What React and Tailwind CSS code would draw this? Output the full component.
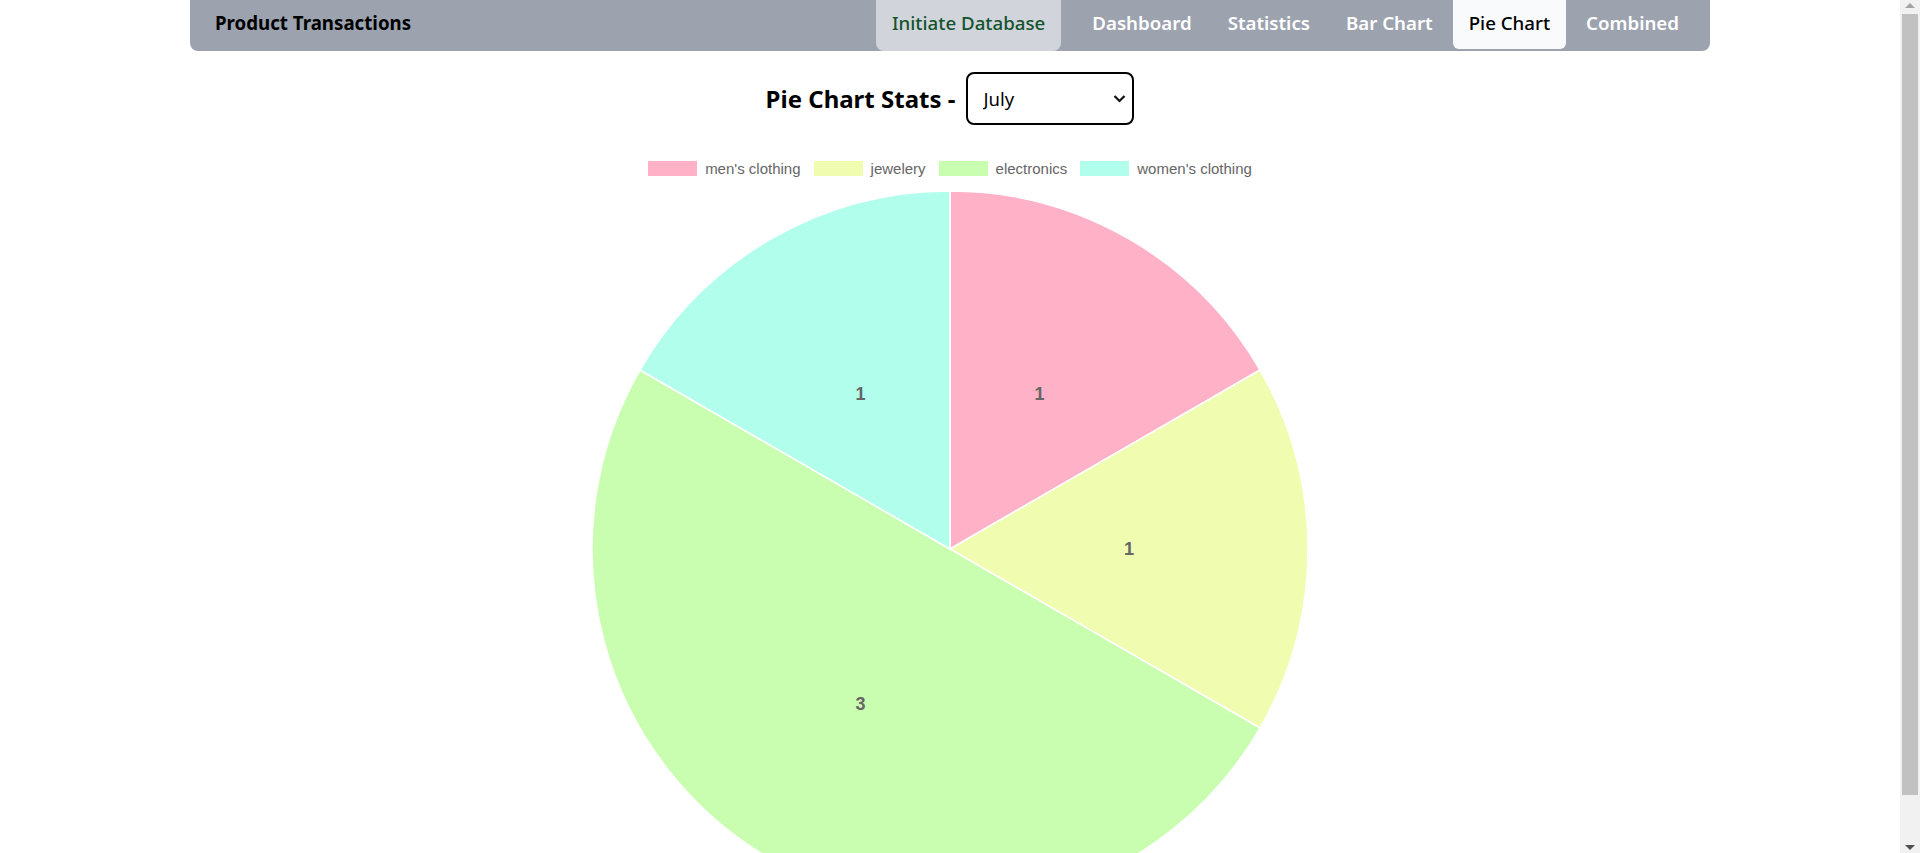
import { useState } from 'react';

const navItems = ['Dashboard', 'Statistics', 'Bar Chart', 'Pie Chart', 'Combined'];

const slices = [
  { label: "men's clothing", value: 1, color: '#ffb1c8' },
  { label: 'jewelery', value: 1, color: '#f0fdb1' },
  { label: 'electronics', value: 3, color: '#c9feb1' },
  { label: "women's clothing", value: 1, color: '#b1feec' },
];

const months = ['January', 'February', 'March', 'April', 'May', 'June', 'July', 'August', 'September', 'October', 'November', 'December'];

// pie geometry
const CX = 360;
const CY = 360;
const R = 358;

function pointAt(deg, radius) {
  const rad = (deg * Math.PI) / 180;
  return [CX + radius * Math.sin(rad), CY - radius * Math.cos(rad)];
}

function PieChart() {
  const total = slices.reduce((s, x) => s + x.value, 0);
  let start = 0;
  const arcs = slices.map((s) => {
    const sweep = (s.value / total) * 360;
    const end = start + sweep;
    const [x1, y1] = pointAt(start, R);
    const [x2, y2] = pointAt(end, R);
    const [lx, ly] = pointAt(start + sweep / 2, R / 2);
    const large = sweep > 180 ? 1 : 0;
    const d = `M${CX} ${CY} L${x1} ${y1} A${R} ${R} 0 ${large} 1 ${x2} ${y2} Z`;
    start = end;
    return { ...s, d, lx, ly };
  });

  return (
    <svg width="720" height="720" viewBox="0 0 720 720">
      {arcs.map((a) => (
        <path key={a.label} d={a.d} fill={a.color} stroke="#ffffff" strokeWidth="1.5" strokeLinejoin="round" />
      ))}
      {arcs.map((a) => (
        <text
          key={a.label + '-v'}
          x={a.lx}
          y={a.ly}
          textAnchor="middle"
          dominantBaseline="central"
          fill="#666666"
          fontSize="18"
          fontWeight="700"
          fontFamily="'Liberation Sans', Arial, sans-serif"
        >
          {a.value}
        </text>
      ))}
    </svg>
  );
}

// imitation of the window's scrollbar seen in the screenshot
function Scrollbar() {
  return (
    <div className="fixed top-0 right-0 h-screen w-[20px] bg-[#f1f1f1] flex flex-col items-center">
      <svg className="mt-[3px]" width="10" height="5" viewBox="0 0 10 5">
        <path d="M0 5 L5 0 L10 5 Z" fill="#a3a3a3" />
      </svg>
      <div className="w-[16px] mt-[6px] h-[781px] bg-[#c1c1c1]" />
      <div className="flex-1" />
      <svg className="mb-[3px]" width="10" height="5" viewBox="0 0 10 5">
        <path d="M0 0 L10 0 L5 5 Z" fill="#505050" />
      </svg>
    </div>
  );
}

export default function App() {
  const [month, setMonth] = useState('July');

  return (
    <div className="min-h-screen bg-white pr-[20px] pb-[24px]" style={{ fontFamily: "'Noto Sans', sans-serif" }}>
      {/* header / nav */}
      <header className="w-4/5 mx-auto h-[51px] bg-[#9ca3af] rounded-b-lg flex items-center justify-between pl-[25px] pr-[15px]">
        <h1 className="text-[18.7px] font-bold text-black mb-[4px]">Product Transactions</h1>
        <nav className="flex items-stretch h-full">
          <button className="h-[51px] px-4 pb-[4px] mr-[15px] bg-[#d1d5db] text-[#14532d] text-[18.7px] font-medium rounded-b-lg">
            Initiate Database
          </button>
          <div className="flex gap-1">
            {navItems.map((item) => (
              <button
                key={item}
                className={
                  item === 'Pie Chart'
                    ? 'h-[49px] px-4 pb-[2px] bg-[#f9fafb] text-black text-[18.7px] font-medium rounded-b-md'
                    : 'h-[49px] px-4 pb-[2px] text-white text-[18.7px] font-semibold'
                }
              >
                {item}
              </button>
            ))}
          </div>
        </nav>
      </header>

      {/* title + month select */}
      <div className="flex items-center justify-center gap-[11px] mt-[21px]">
        <h2 className="text-[24px] font-bold text-black">Pie Chart Stats -</h2>
        <div className="relative">
          <select
            value={month}
            onChange={(e) => setMonth(e.target.value)}
            className="appearance-none w-[168px] h-[53px] border-2 border-black rounded-lg pl-[15px] pr-8 text-[18.5px] text-black bg-white outline-none"
          >
            {months.map((m) => (
              <option key={m} value={m}>{m}</option>
            ))}
          </select>
          <svg className="absolute right-[8px] top-[22px] pointer-events-none" width="13" height="9" viewBox="0 0 13 9">
            <path d="M1.5 2 L6.5 7 L11.5 2" fill="none" stroke="#111" strokeWidth="2.2" />
          </svg>
        </div>
      </div>

      {/* legend */}
      <div
        className="flex justify-center items-center mt-[36px] text-[15px] text-[#666666]"
        style={{ fontFamily: "'Liberation Sans', Arial, sans-serif" }}
      >
        {slices.map((s) => (
          <div key={s.label} className="flex items-center mr-[13px] last:mr-0">
            <span className="w-[49px] h-[15px] mr-[8px]" style={{ backgroundColor: s.color }} />
            <span className="leading-[15px]">{s.label}</span>
          </div>
        ))}
      </div>

      {/* pie */}
      <div className="flex justify-center mt-[13px]">
        <PieChart />
      </div>

      <Scrollbar />
    </div>
  );
}
